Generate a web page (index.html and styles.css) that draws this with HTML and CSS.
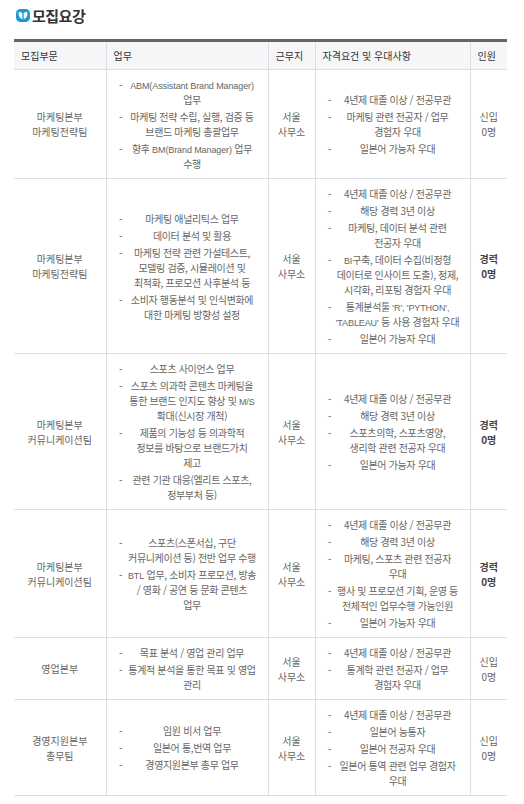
FILE: index.html
```html
<!DOCTYPE html>
<html lang="ko">
<head>
<meta charset="utf-8">
<title>모집요강</title>
<link rel="stylesheet" href="styles.css">
</head>
<body>
<div class="page">
  <h2 class="title">
    <svg class="logo" viewBox="0 0 14 13" width="14" height="13" aria-hidden="true">
      <rect x="0" y="0" width="14" height="13" rx="4.5" fill="#1b9ad6"/>
      <path d="M2.6 3.4 C3.6 2.6 5.6 3 6.3 4.6 L6.3 10.2 C4.6 9.6 3 8 2.6 6 Z" fill="#fff"/>
      <path d="M11.4 3.4 C10.4 2.6 8.4 3 7.7 4.6 L7.7 10.2 C9.4 9.6 11 8 11.4 6 Z" fill="#fff"/>
    </svg>
    <span>모집요강</span>
  </h2>
  <table class="recruit">
    <colgroup>
      <col class="c-dept">
      <col class="c-job">
      <col class="c-loc">
      <col class="c-req">
      <col class="c-num">
    </colgroup>
    <thead>
      <tr>
        <th>모집부문</th>
        <th>업무</th>
        <th>근무지</th>
        <th>자격요건 및 우대사항</th>
        <th>인원</th>
      </tr>
    </thead>
    <tbody>
      <tr>
        <td class="center">마케팅본부<br>마케팅전략팀</td>
        <td class="job"><ul class="dash">
          <li><span class="en">ABM(Assistant Brand Manager)</span><br>업무</li>
          <li>마케팅 전략 수립, 실행, 검증 등<br>브랜드 마케팅 총괄업무</li>
          <li>향후 <span class="en">BM(Brand Manager)</span> 업무<br>수행</li>
        </ul></td>
        <td class="center">서울<br>사무소</td>
        <td class="req"><ul class="dash">
          <li>4년제 대졸 이상 / 전공무관</li>
          <li>마케팅 관련 전공자 / 업무<br>경험자 우대</li>
          <li>일본어 가능자 우대</li>
        </ul></td>
        <td class="center">신입<br>0명</td>
      </tr>
      <tr>
        <td class="center">마케팅본부<br>마케팅전략팀</td>
        <td class="job"><ul class="dash">
          <li>마케팅 애널리틱스 업무</li>
          <li>데이터 분석 및 활용</li>
          <li>마케팅 전략 관련 가설테스트,<br>모델링 검증, 시뮬레이션 및<br>최적화, 프로모션 사후분석 등</li>
          <li>소비자 행동분석 및 인식변화에<br>대한 마케팅 방향성 설정</li>
        </ul></td>
        <td class="center">서울<br>사무소</td>
        <td class="req"><ul class="dash">
          <li>4년제 대졸 이상 / 전공무관</li>
          <li>해당 경력 3년 이상</li>
          <li>마케팅, 데이터 분석 관련<br>전공자 우대</li>
          <li><span class="en">BI</span>구축, 데이터 수집(비정형<br>데이터로 인사이트 도출), 정제,<br>시각화, 리포팅 경험자 우대</li>
          <li>통계분석툴 <span class="en">'R', 'PYTHON',</span><br><span class="en">'TABLEAU'</span> 등 사용 경험자 우대</li>
          <li>일본어 가능자 우대</li>
        </ul></td>
        <td class="center strong">경력<br>0명</td>
      </tr>
      <tr>
        <td class="center">마케팅본부<br>커뮤니케이션팀</td>
        <td class="job"><ul class="dash">
          <li>스포츠 사이언스 업무</li>
          <li>스포츠 의과학 콘텐츠 마케팅을<br>통한 브랜드 인지도 향상 및 <span class="en">M/S</span><br>확대(신시장 개척)</li>
          <li>제품의 기능성 등 의과학적<br>정보를 바탕으로 브랜드가치<br>제고</li>
          <li>관련 기관 대응(엘리트 스포츠,<br>정부부처 등)</li>
        </ul></td>
        <td class="center">서울<br>사무소</td>
        <td class="req"><ul class="dash">
          <li>4년제 대졸 이상 / 전공무관</li>
          <li>해당 경력 3년 이상</li>
          <li>스포츠의학, 스포츠영양,<br>생리학 관련 전공자 우대</li>
          <li>일본어 가능자 우대</li>
        </ul></td>
        <td class="center strong">경력<br>0명</td>
      </tr>
      <tr>
        <td class="center">마케팅본부<br>커뮤니케이션팀</td>
        <td class="job"><ul class="dash">
          <li>스포츠(스폰서십, 구단<br>커뮤니케이션 등) 전반 업무 수행</li>
          <li><span class="en">BTL</span> 업무, 소비자 프로모션, 방송<br>/ 영화 / 공연 등 문화 콘텐츠<br>업무</li>
        </ul></td>
        <td class="center">서울<br>사무소</td>
        <td class="req"><ul class="dash">
          <li>4년제 대졸 이상 / 전공무관</li>
          <li>해당 경력 3년 이상</li>
          <li>마케팅, 스포츠 관련 전공자<br>우대</li>
          <li>행사 및 프로모션 기획, 운영 등<br>전체적인 업무수행 가능인원</li>
          <li>일본어 가능자 우대</li>
        </ul></td>
        <td class="center strong">경력<br>0명</td>
      </tr>
      <tr>
        <td class="center">영업본부</td>
        <td class="job"><ul class="dash">
          <li>목표 분석 / 영업 관리 업무</li>
          <li>통계적 분석을 통한 목표 및 영업<br>관리</li>
        </ul></td>
        <td class="center">서울<br>사무소</td>
        <td class="req"><ul class="dash">
          <li>4년제 대졸 이상 / 전공무관</li>
          <li>통계학 관련 전공자 / 업무<br>경험자 우대</li>
        </ul></td>
        <td class="center">신입<br>0명</td>
      </tr>
      <tr>
        <td class="center">경영지원본부<br>총무팀</td>
        <td class="job"><ul class="dash">
          <li>임원 비서 업무</li>
          <li>일본어 통,번역 업무</li>
          <li>경영지원본부 총무 업무</li>
        </ul></td>
        <td class="center">서울<br>사무소</td>
        <td class="req"><ul class="dash">
          <li>4년제 대졸 이상 / 전공무관</li>
          <li>일본어 능통자</li>
          <li>일본어 전공자 우대</li>
          <li>일본어 통역 관련 업무 경험자<br>우대</li>
        </ul></td>
        <td class="center">신입<br>0명</td>
      </tr>
    </tbody>
  </table>
</div>
</body>
</html>
```
FILE: styles.css
```css
html, body {
  margin: 0;
  padding: 0;
  background: #fff;
}
body {
  font-family: "Noto Sans CJK KR", "Noto Sans", sans-serif;
  color: #666;
}
.page {
  padding: 7px 17px 0 14px;
}
.title {
  display: flex;
  align-items: center;
  gap: 2px;
  margin: 0 0 16px 2px;
  height: 16px;
  font-size: 15px;
  font-weight: 700;
  color: #333;
  letter-spacing: -0.5px;
}
.logo {
  display: block;
  flex: none;
}
.recruit {
  width: 493px;
  border-collapse: collapse;
  table-layout: fixed;
  font-size: 10px;
  line-height: 15px;
  border-top: 3px solid #666;
}
.c-dept { width: 92px; }
.c-job { width: 162px; }
.c-loc { width: 47px; }
.c-req { width: 155px; }
.c-num { width: 37px; }
.recruit th {
  background: #f6f6f8;
  color: #333;
  font-weight: 400;
  text-align: left;
  height: 27px;
  padding: 0 0 0 7px;
  border-bottom: 1px solid #dcdde5;
  border-left: 1px solid #dcdde5;
}
.recruit td {
  vertical-align: middle;
  padding: 7px 8px 7px;
  border-bottom: 1px solid #dcdde5;
  border-left: 1px solid #dcdde5;
  word-break: keep-all;
  letter-spacing: -0.35px;
}
.recruit th:first-child,
.recruit td:first-child {
  border-left: none;
}
.recruit td.center {
  text-align: center;
  padding-left: 0;
  padding-right: 0;
  letter-spacing: 0;
}
.recruit td.strong {
  font-weight: 700;
  color: #444;
}
.dash {
  margin: 0;
  padding: 0 0 0 10px;
  list-style: "- " outside;
}
.dash li {
  text-align: center;
  margin-bottom: 2px;
}
.dash li:last-child {
  margin-bottom: 0;
}
.en {
  font-family: "Liberation Sans", Arial, sans-serif;
  font-size: 9px;
  line-height: 10px;
  letter-spacing: -0.1px;
}
```
